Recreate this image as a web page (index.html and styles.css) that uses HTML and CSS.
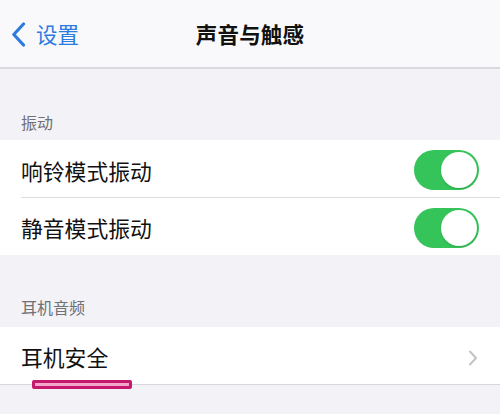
FILE: index.html
```html
<!DOCTYPE html>
<html lang="zh-CN">
<head>
<meta charset="utf-8">
<link rel="stylesheet" href="styles.css">
</head>
<body>
<div class="screen">
  <header class="nav">
    <div class="back">
      <svg class="back-icon" width="15" height="25" viewBox="0 0 15 25"><path d="M12.5 2 L2.8 12.5 L12.5 23" fill="none" stroke="#2c7be0" stroke-width="3.2" stroke-linecap="round" stroke-linejoin="round"/></svg>
      <span class="back-text">设置</span>
    </div>
    <div class="title">声音与触感</div>
  </header>

  <div class="section-header first">振动</div>
  <div class="group">
    <div class="row divided">
      <span class="label">响铃模式振动</span>
      <span class="toggle"><span class="knob"></span></span>
    </div>
    <div class="row">
      <span class="label">静音模式振动</span>
      <span class="toggle"><span class="knob"></span></span>
    </div>
  </div>

  <div class="section-header second">耳机音频</div>
  <div class="group">
    <div class="row last">
      <span class="label">耳机安全</span>
      <svg class="chevron" width="10" height="16" viewBox="0 0 10 16"><path d="M2 1.5 L8 8 L2 14.5" fill="none" stroke="#c4c4c8" stroke-width="2" stroke-linecap="round" stroke-linejoin="round"/></svg>
      <span class="mark"></span>
    </div>
  </div>
</div>
</body>
</html>
```

FILE: styles.css
```css
html, body {
  margin: 0;
  padding: 0;
}
body {
  width: 500px;
  height: 414px;
  overflow: hidden;
  background: #f2f2f7;
  font-family: "Noto Sans CJK SC", "Noto Sans", sans-serif;
}
.screen {
  display: flex;
  flex-direction: column;
}
.nav {
  position: relative;
  height: 67px;
  background: #f9f9fb;
  border-bottom: 2px solid #dadade;
  display: flex;
  align-items: center;
}
.back {
  display: flex;
  align-items: center;
  gap: 10px;
  padding-left: 11px;
  color: #2c7be0;
  font-size: 21px;
  line-height: 24px;
  padding-top: 2px;
}
.back-text {
  margin-top: -2px;
  font-size: 21.5px;
}
.title {
  position: absolute;
  left: 0;
  right: 0;
  top: 0;
  bottom: 0;
  display: flex;
  align-items: center;
  justify-content: center;
  font-size: 21.5px;
  font-weight: 700;
  color: #111;
  letter-spacing: 0.2px;
  pointer-events: none;
}
.section-header {
  display: flex;
  align-items: flex-end;
  padding-left: 21px;
  font-size: 16px;
  line-height: 20px;
  color: #707075;
}
.section-header.first {
  height: 71px;
  box-sizing: border-box;
  padding-bottom: 8px;
}
.section-header.second {
  height: 72px;
  box-sizing: border-box;
  padding-bottom: 10px;
}
.group {
  background: #fff;
}
.row {
  position: relative;
  height: 57px;
  display: flex;
  align-items: center;
  justify-content: space-between;
  padding: 0 21px 0 21px;
}
.row.divided {
  height: 58px;
}
.row.divided::after {
  content: "";
  position: absolute;
  left: 21px;
  right: 0;
  bottom: 0;
  height: 1px;
  background: #dcdce0;
}
.row.last {
  border-bottom: 1px solid #d8d8dc;
  padding-right: 22px;
}
.label {
  font-size: 21.8px;
  line-height: 28px;
  color: #111;
  margin-top: 3px;
}
.toggle {
  width: 65px;
  height: 40px;
  border-radius: 20px;
  background: #34c459;
  display: flex;
  align-items: center;
  justify-content: flex-end;
  padding-right: 2px;
  box-sizing: border-box;
  margin-top: 2px;
}
.knob {
  width: 36px;
  height: 36px;
  border-radius: 50%;
  background: #fff;
  box-shadow: 0 1px 2px rgba(0,0,0,0.15);
}
.chevron {
  margin-top: 4px;
}
.mark {
  position: absolute;
  left: 32px;
  top: 53px;
  width: 100px;
  height: 9px;
  box-sizing: border-box;
  border: 3px solid #c4196d;
  border-radius: 2px;
  background: #f3a7cb;
}
```
